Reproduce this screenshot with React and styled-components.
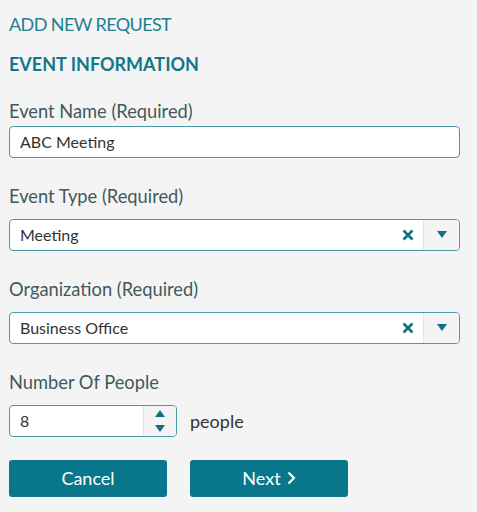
import React from 'react';
import styled, { createGlobalStyle } from 'styled-components';

const GlobalStyle = createGlobalStyle`
  body {
    margin: 0;
    background: #f4f4f4;
    font-family: Lato, "Open Sans", sans-serif;
  }
`

const Page = styled.div`
  width: 477px;
  height: 512px;
  box-sizing: border-box;
  padding: 11px 17px 0 9px;
  background: #f4f4f4;
`

const Title = styled.h1`
  margin: 0;
  font-size: 18px;
  font-weight: 400;
  line-height: 26px;
  letter-spacing: -0.6px;
  color: #1f7f8f;
`

const Section = styled.h2`
  margin: 15px 0 23px;
  font-size: 18px;
  font-weight: 700;
  line-height: 24px;
  color: #127789;
`

const Field = styled.div`
  display: flex;
  flex-direction: column;
  margin-bottom: 26.5px;
`

const Label = styled.label`
  font-size: 18.3px;
  line-height: 24px;
  color: #41595d;
  margin-bottom: ${p => p.$tight ? '2.5px' : '10.5px'};
`

const Box = styled.div`
  display: flex;
  align-items: stretch;
  height: 32px;
  width: ${p => p.$width || '100%'};
  box-sizing: border-box;
  background: #fff;
  border: 1.5px solid #4c99a6;
  border-radius: 4px;
  overflow: hidden;
`

const Value = styled.div`
  flex: 1;
  display: flex;
  align-items: center;
  padding-left: 10px;
  font-size: 16px;
  color: #333;
`

const Clear = styled.div`
  width: 30px;
  display: flex;
  align-items: center;
  justify-content: center;
`

const Side = styled.div`
  width: ${p => p.$width}px;
  display: flex;
  flex-direction: ${p => p.$column ? 'column' : 'row'};
  align-items: center;
  justify-content: center;
  gap: 8px;
  background: #f4f4f4;
  border-left: 1px solid #e4e4e4;
`

const Row = styled.div`
  display: flex;
  align-items: center;
  gap: 13px;
`

const Unit = styled.span`
  font-size: 18px;
  color: #333;
`

const Buttons = styled.div`
  display: flex;
  gap: 23px;
  margin-top: -3.5px;
`

const Button = styled.button`
  width: 158px;
  height: 37px;
  border: none;
  border-radius: 3px;
  background: #08768b;
  color: #fff;
  font-family: Lato, sans-serif;
  font-size: 18px;
  display: flex;
  align-items: center;
  justify-content: center;
  gap: 6px;
`

const Cross = () => (
  <svg width="12" height="12" viewBox="0 0 12 12">
    <path d="M1.5 1.5 L10.5 10.5 M10.5 1.5 L1.5 10.5" stroke="#0f7086" strokeWidth="2.6" />
  </svg>
)

const Tri = ({ up }) => (
  <svg width="10" height="7" viewBox="0 0 10 7">
    <path d={up ? 'M0 7 L5 0 L10 7 Z' : 'M0 0 L10 0 L5 7 Z'} fill="#0f7086" />
  </svg>
)

const Chevron = () => (
  <svg width="9" height="14" viewBox="0 0 9 14">
    <path d="M1.5 1.5 L7 7 L1.5 12.5" stroke="#fff" strokeWidth="2.2" fill="none" />
  </svg>
)

const Select = ({ value }) => (
  <Box>
    <Value>{value}</Value>
    <Clear><Cross /></Clear>
    <Side $width={35}><Tri /></Side>
  </Box>
)

const App = () => (
  <Page>
    <GlobalStyle />
    <Title>ADD NEW REQUEST</Title>
    <Section>EVENT INFORMATION</Section>
    <Field>
      <Label $tight>Event Name (Required)</Label>
      <Box><Value>ABC Meeting</Value></Box>
    </Field>
    <Field>
      <Label>Event Type (Required)</Label>
      <Select value="Meeting" />
    </Field>
    <Field>
      <Label>Organization (Required)</Label>
      <Select value="Business Office" />
    </Field>
    <Field>
      <Label>Number Of People</Label>
      <Row>
        <Box $width="168px">
          <Value>8</Value>
          <Side $width={32} $column><Tri up /><Tri /></Side>
        </Box>
        <Unit>people</Unit>
      </Row>
    </Field>
    <Buttons>
      <Button>Cancel</Button>
      <Button>Next <Chevron /></Button>
    </Buttons>
  </Page>
)

export default App;
